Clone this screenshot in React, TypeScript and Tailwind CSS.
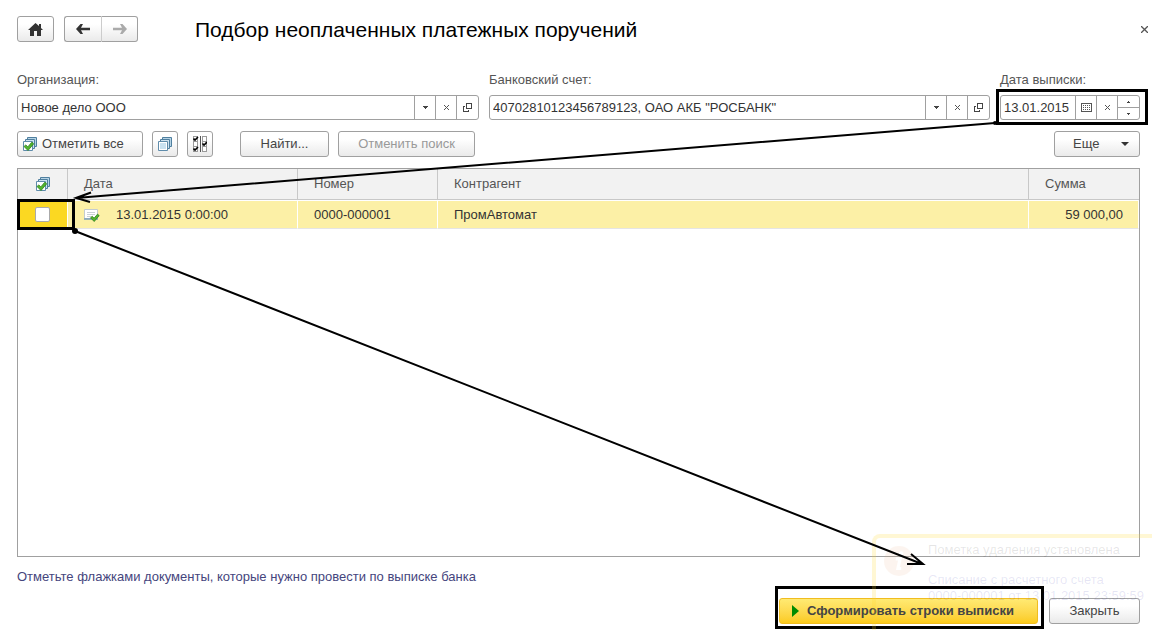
import type { ReactNode } from "react";
import clsx from "clsx";

const buttonStyle =
    "h-[26px] rounded-[3px] border border-[#a0a0a0] bg-linear-to-b from-white from-30% to-[#eaeaea] text-[#444] flex items-center";

const rows = [
    { date: "13.01.2015 0:00:00", number: "0000-000001", partner: "ПромАвтомат", sum: "59 000,00" },
];

function StackIcon({ checked = false }: { checked?: boolean }) {
    return (
        <svg width="16" height="16" viewBox="0 0 16 16" className="shrink-0">
            <path d="M5.5 1.5h9v9h-9z" fill="#b5d3e5" stroke="#4f7f9f" />
            <path d="M3.5 3.5h9v9h-9z" fill="#cde2ef" stroke="#4f7f9f" />
            <path d="M1.5 5.5h9v9h-9z" fill="#fff" stroke="#5f8cab" />
            {checked ? (
                <path d="M2 10.500l1.800-1.600 2 2 4-4.700 1.900 1.600-5.700 6.700z" fill="#52b52c" stroke="#2c7d1a" strokeWidth="0.8" />
            ) : (
                <path d="M3 7h6v6H3z" fill="#c9e2f1" />
            )}
        </svg>
    );
}

function InvertIcon() {
    return (
        <svg width="14" height="16" viewBox="0 0 14 16" shapeRendering="crispEdges">
            <g fill="#fff" stroke="#999">
                <path d="M.5.5h4v5h-4zM.5 5.500h4v5h-4zM.5 10.500h4v5h-4z" />
                <path d="M9.500.5h4v5h-4zM9.500 5.500h4v5h-4zM9.500 10.500h4v5h-4z" />
            </g>
            <path d="M7 0v16" stroke="#555" />
            <g fill="none" stroke="#000" strokeWidth="1.600" shapeRendering="auto">
                <path d="M.5 2.500L2 4l3-3M.5 12.500L2 14l3-3M9.500 7.500L11 9l3-3" />
            </g>
        </svg>
    );
}

function DocumentIcon() {
    return (
        <svg width="16" height="14" viewBox="0 0 16 14" className="shrink-0">
            <path d="M.5 1.500h13v9H.5z" fill="#fff" stroke="#c4ccd0" />
            <path d="M0 11h14" stroke="#7a9fb8" strokeWidth="1.500" />
            <path d="M3 4.500h8M3 6.500h8M3 8.500h4" stroke="#c9d0d5" />
            <path d="M6.500 9.800l1.700-1.500 1.900 1.900 3.400-4 1.700 1.400-5 5.900z" fill="#52b52c" stroke="#2c7d1a" strokeWidth="0.8" />
        </svg>
    );
}

function CaretIcon() {
    return (
        <svg width="5" height="3" viewBox="0 0 5 3" shapeRendering="crispEdges"><path d="M0 0h5v1H0zM1 1h3v1H1zM2 2h1v1H2z" fill="#444" /></svg>
    );
}

function ClearIcon() {
    return (
        <svg width="5" height="5" viewBox="0 0 5 5"><path d="M0 0l5 5M5 0L0 5" stroke="#555" /></svg>
    );
}

function OpenIcon() {
    return (
        <svg width="9" height="9" viewBox="0 0 9 9" fill="none" stroke="#444" shapeRendering="crispEdges">
            <path d="M3.500.5h5v5h-5zM2 3.500H.5v5h5V7" />
        </svg>
    );
}

function CalendarIcon() {
    return (
        <svg width="11" height="9" viewBox="0 0 11 9" fill="none" stroke="#555" shapeRendering="crispEdges">
            <path d="M.5.5h10v8H.5z" />
            <path d="M2 2.500h7M2 4.500h7M2 6.500h7" strokeDasharray="1 1" />
        </svg>
    );
}

function FieldButton({ label, children }: { label: string; children: ReactNode }) {
    return (
        <button type="button" aria-label={label} className="w-[21px] shrink-0 border-l border-[#a0a0a0] flex items-center justify-center last:w-[22px]">
            {children}
        </button>
    );
}

interface FieldProps {
    id: string;
    label: string;
    value: string;
    className: string;
    children: ReactNode;
}

function Field({ id, label, value, className, children }: FieldProps) {
    return (
        <div className={clsx("flex flex-col min-w-0", className)}>
            <label htmlFor={id} className="h-[23px] leading-4 text-[#555]">{label}</label>
            <div className="flex h-[25px] rounded-[3px] border border-[#a0a0a0] bg-white">
                <input id={id} defaultValue={value} className="min-w-0 flex-1 px-[3px] text-[#333] outline-none" />
                {children}
            </div>
        </div>
    );
}

function Notification() {
    return (
        <div className="pointer-events-none absolute right-0 bottom-0 flex h-[96px] w-[280px] gap-[14px] overflow-hidden rounded-tl-lg border-t-4 border-l-4 border-[#fcd82a]/20 pt-1 pl-2 whitespace-nowrap">
            <svg width="30" height="30" viewBox="0 0 28 28" className="mt-1 shrink-0 opacity-10">
                <circle cx="14" cy="14" r="14" fill="#e8a070" />
                <circle cx="16" cy="7" r="2" fill="#fff" />
                <path d="M11 12h4l-2 9h3" fill="none" stroke="#fff" strokeWidth="3" />
            </svg>
            <div className="leading-4">
                <p className="text-[#333]/12">Пометка удаления установлена</p>
                <p className="mt-[14px] text-[#3333aa]/12">Списание с расчетного счета</p>
                <p className="text-[#3333aa]/12">0000-000001 от 13.01.2015 23:59:59</p>
            </div>
        </div>
    );
}

function Arrows() {
    return (
        <svg viewBox="0 0 1152 630" preserveAspectRatio="none" className="pointer-events-none absolute inset-0 size-full" fill="none" stroke="#000" strokeWidth="2">
            <path d="M995 123L76 198M91 192.500L76 198l14 4" />
            <path d="M75 231l847 333M911 554l12 10h-16" />
            <circle cx="995" cy="123" r="2" fill="#000" stroke="none" />
            <circle cx="75" cy="231" r="3" fill="#000" stroke="none" />
        </svg>
    );
}

export default function App() {
    return (
        <div className="relative flex min-h-screen flex-col overflow-hidden bg-white pt-4 pr-3 pb-[6px] pl-[17px] font-['Liberation_Sans',Arial,sans-serif] text-[13px]">
            <header className="-mr-2 flex h-[26px] items-center">
                <button type="button" aria-label="Домой" className={clsx(buttonStyle, "w-[37px] justify-center")}>
                    <svg width="15" height="13" viewBox="0 0 15 13" fill="#333">
                        <path d="M7.500 0L0 7h2v6h4V8h3v5h4V7h2l-2-2V1h-2v2z" />
                    </svg>
                </button>
                <div className="ml-[10px] flex">
                    <button type="button" aria-label="Назад" className={clsx(buttonStyle, "w-[37px] justify-center rounded-r-none border-r-0")}>
                        <svg width="14" height="10" viewBox="0 0 14 10"><path d="M4.500 0H7L5 3.700h9v2.600H5L7 10H4.500L0 5z" fill="#333" /></svg>
                    </button>
                    <button type="button" aria-label="Вперед" className={clsx(buttonStyle, "w-[37px] justify-center rounded-l-none border-l-[#ccc]")}>
                        <svg width="14" height="10" viewBox="0 0 14 10"><path d="M9.500 0H7l2 3.700H0v2.600h9L7 10h2.500L14 5z" fill="#aaa" /></svg>
                    </button>
                </div>
                <h1 className="ml-[57px] pt-[2px] text-[21px] text-black">Подбор неоплаченных платежных поручений</h1>
                <button type="button" aria-label="Закрыть окно" className="ml-auto">
                    <svg width="7" height="7" viewBox="0 0 7 7"><path d="M0 0l7 7M7 0L0 7" stroke="#555" strokeWidth="1.300" /></svg>
                </button>
            </header>

            <div className="mt-[30px] flex gap-[10px]">
                <Field id="organization" label="Организация:" value="Новое дело ООО" className="flex-[462]">
                    <FieldButton label="Выбрать"><CaretIcon /></FieldButton>
                    <FieldButton label="Очистить"><ClearIcon /></FieldButton>
                    <FieldButton label="Открыть"><OpenIcon /></FieldButton>
                </Field>
                <Field id="account" label="Банковский счет:" value={'40702810123456789123, ОАО АКБ "РОСБАНК"'} className="flex-[501]">
                    <FieldButton label="Выбрать"><CaretIcon /></FieldButton>
                    <FieldButton label="Очистить"><ClearIcon /></FieldButton>
                    <FieldButton label="Открыть"><OpenIcon /></FieldButton>
                </Field>
                <div className="relative w-[140px] shrink-0">
                    <Field id="date" label="Дата выписки:" value="13.01.2015" className="w-full">
                        <FieldButton label="Календарь"><CalendarIcon /></FieldButton>
                        <FieldButton label="Очистить"><ClearIcon /></FieldButton>
                        <div className="flex w-[22px] shrink-0 flex-col border-l border-[#a0a0a0]">
                            <button type="button" aria-label="Больше" className="flex flex-1 items-center justify-center border-b border-[#a0a0a0]">
                                <svg width="3" height="2" viewBox="0 0 3 2" shapeRendering="crispEdges"><path d="M1 0h1v1H1zM0 1h3v1H0z" fill="#444" /></svg>
                            </button>
                            <button type="button" aria-label="Меньше" className="flex flex-1 items-center justify-center">
                                <svg width="3" height="2" viewBox="0 0 3 2" shapeRendering="crispEdges"><path d="M0 0h3v1H0zM1 1h1v1H1z" fill="#444" /></svg>
                            </button>
                        </div>
                    </Field>
                    <div className="pointer-events-none absolute top-[17px] -right-2 -bottom-[5px] -left-1 border-3 border-black" />
                </div>
            </div>

            <div className="mt-[11px] flex">
                <button type="button" className={clsx(buttonStyle, "w-[126px] gap-1 pl-1")}>
                    <StackIcon checked />
                    Отметить все
                </button>
                <button type="button" aria-label="Снять отметки" className={clsx(buttonStyle, "ml-[9px] w-[26px] justify-center")}><StackIcon /></button>
                <button type="button" aria-label="Инвертировать отметки" className={clsx(buttonStyle, "ml-[9px] w-[26px] justify-center")}><InvertIcon /></button>
                <button type="button" className={clsx(buttonStyle, "ml-[27px] w-[89px] justify-center")}>Найти...</button>
                <button type="button" disabled className={clsx(buttonStyle, "ml-[9px] w-[137px] justify-center text-[#999]")}>Отменить поиск</button>
                <button type="button" className={clsx(buttonStyle, "ml-auto w-[86px] justify-between pr-[10px] pl-[18px]")}>
                    Еще
                    <svg width="8" height="4" viewBox="0 0 8 4"><path d="M0 0h8L4 4z" fill="#333" /></svg>
                </button>
            </div>

            <div className="mt-[11px] flex-1 border border-[#a0a0a0]">
                <table className="w-full table-fixed border-separate border-spacing-0 text-left">
                    <thead>
                        <tr className="h-[31px] bg-[#f2f2f2] text-[#555] *:border-b *:border-[#c8c8c8] *:p-0 *:font-normal">
                            <th className="w-[50px] border-r" aria-label="Отметка">
                                <div className="flex justify-center"><StackIcon checked /></div>
                            </th>
                            <th className="w-[230px] border-r"><span className="pl-4">Дата</span></th>
                            <th className="w-[140px] border-r"><span className="pl-4">Номер</span></th>
                            <th className="border-r"><span className="pl-4">Контрагент</span></th>
                            <th className="w-[110px]"><span className="pl-4">Сумма</span></th>
                        </tr>
                    </thead>
                    <tbody>
                        {rows.map((row) => (
                            <tr key={row.number} className="h-[29px] bg-[#fcf0a6] text-[#333] *:border-t *:border-r *:border-b *:border-t-white *:border-r-white *:border-b-[#e5e5e5] *:p-0">
                                <td className="relative bg-[#fbd822]">
                                    <input type="checkbox" aria-label={row.number} className="mx-auto block size-[15px] appearance-none rounded-[2px] border border-[#aaa] bg-white" />
                                    <div className="pointer-events-none absolute -top-[2px] -right-[8px] -bottom-[2px] -left-px z-10 border-3 border-black" />
                                </td>
                                <td>
                                    <div className="flex items-center gap-4 pl-4"><DocumentIcon />{row.date}</div>
                                </td>
                                <td><span className="pl-4">{row.number}</span></td>
                                <td><span className="pl-4">{row.partner}</span></td>
                                <td className="text-right"><span className="pr-[15px]">{row.sum}</span></td>
                            </tr>
                        ))}
                    </tbody>
                </table>
            </div>

            <p className="mt-3 leading-4 text-[#45457d]">Отметьте флажками документы, которые нужно провести по выписке банка</p>
            <div className="mt-[13px] flex justify-end gap-[11px]">
                <button type="button" className="relative flex h-[26px] w-[259px] items-center gap-2 rounded-[3px] border border-[#f0bd20] bg-linear-to-b from-[#ffea72] to-[#fbcb1a] pl-3 font-bold text-[#444]">
                    <svg width="7" height="12" viewBox="0 0 7 12"><path d="M0 0l7 6-7 6z" fill="#008a00" /></svg>
                    Сформировать строки выписки
                    <span className="pointer-events-none absolute -top-[13px] -right-[7px] -bottom-[6px] -left-[5px] border-3 border-black" />
                </button>
                <button type="button" className={clsx(buttonStyle, "w-[91px] justify-center")}>Закрыть</button>
            </div>

            <Notification />
            <Arrows />
        </div>
    );
}
